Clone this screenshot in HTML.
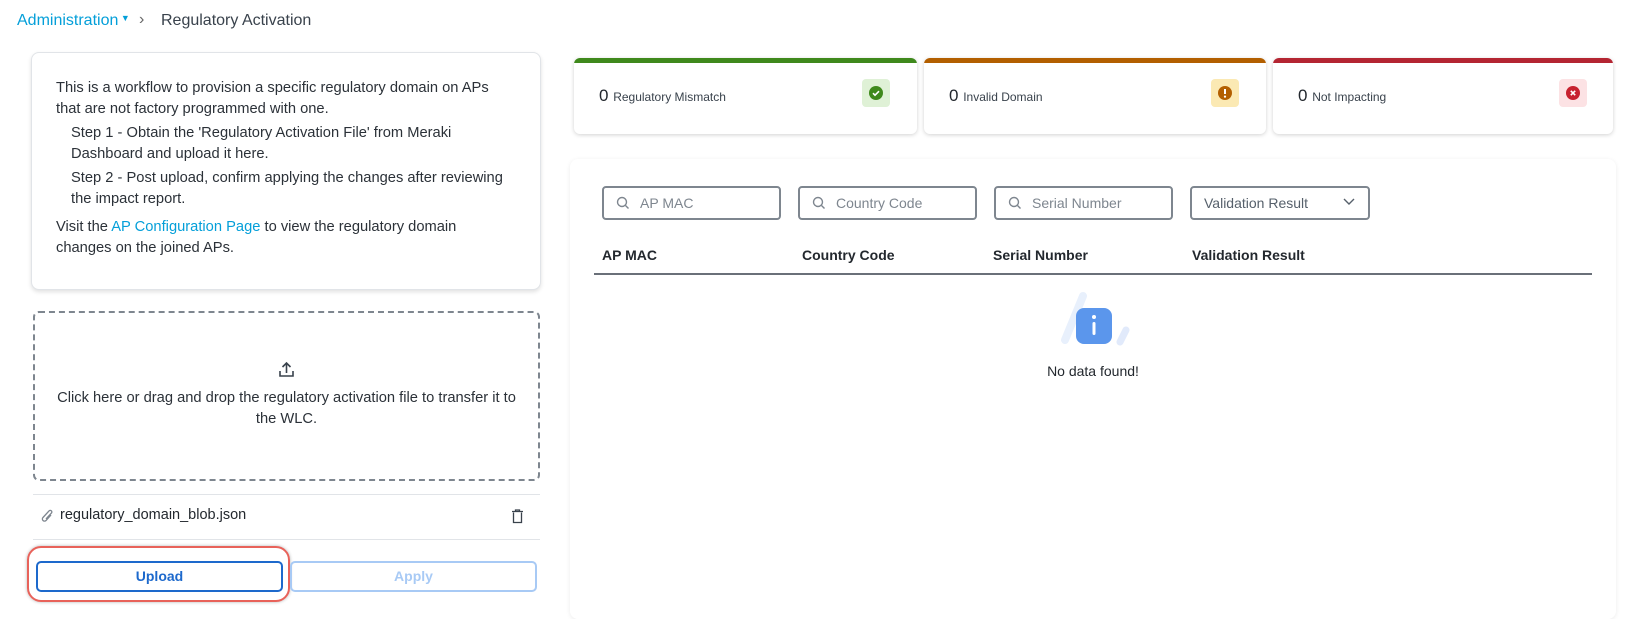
<!DOCTYPE html>
<html><head><meta charset="utf-8"><style>
*{box-sizing:border-box;margin:0;padding:0}
body{width:1640px;height:604px;overflow:hidden;background:#fff;font-family:"Liberation Sans",sans-serif;color:#23282e;font-size:14px;position:relative}
.a{position:absolute}
.card{position:absolute;background:#fff;border:1px solid #e1e4e8;border-radius:8px;box-shadow:0 2px 4px rgba(0,0,0,.12)}
.stat{position:absolute;top:58px;height:76px;background:#fff;border-radius:6px;box-shadow:0 1px 4px rgba(0,0,0,.18);overflow:hidden}
.stat .bar{height:5px}
.stat .t{position:absolute;left:25px;top:28px;font-size:17px;color:#23282e}
.stat .t small{font-size:12px;color:#39424c}
.stat .ic{position:absolute;top:21px;width:28px;height:28px;border-radius:4px;display:flex;align-items:center;justify-content:center}
.inp{position:absolute;top:186px;height:34px;border:2px solid #7e868f;border-radius:4px;color:#7e868f;font-size:14px;line-height:30px;padding-left:36px}
.th{position:absolute;top:247px;font-weight:bold;font-size:14px;color:#23282e}
</style></head><body>
<div class="a" style="left:17px;top:12px;font-size:16px;color:#049fd9">Administration<span style="font-size:9px;vertical-align:4px"> ▼</span></div>
<div class="a" style="left:139px;top:11px;font-size:16px;color:#666">›</div>
<div class="a" style="left:161px;top:12px;font-size:16px;color:#39424c">Regulatory Activation</div>

<div class="card" style="left:31px;top:52px;width:510px;height:238px"></div>
<div class="a" style="left:56px;top:78px;width:452px;line-height:20.5px;font-size:14.7px;color:#2b3138">
<div>This is a workflow to provision a specific regulatory domain on APs that are not factory programmed with one.</div>
<div style="padding-left:15px;margin-top:4px">Step 1 - Obtain the 'Regulatory Activation File' from Meraki Dashboard and upload it here.</div>
<div style="padding-left:15px;margin-top:4px">Step 2 - Post upload, confirm applying the changes after reviewing the impact report.</div>
<div style="margin-top:8px">Visit the <span style="color:#049fd9">AP Configuration Page</span> to view the regulatory domain changes on the joined APs.</div>
</div>

<div class="a" style="left:33px;top:311px;width:507px;height:170px;border:2px dashed #7e868f;border-radius:6px"></div>
<svg class="a" style="left:278px;top:361px" width="17" height="17" viewBox="0 0 17 17" fill="none" stroke="#39424c" stroke-width="1.6"><path d="M8.5 12V2M4.5 6l4-4 4 4M2 10v5h13v-5"/></svg>
<div class="a" style="left:50px;top:388px;width:473px;text-align:center;line-height:21px;font-size:14.7px;color:#2b3138">Click here or drag and drop the regulatory activation file to transfer it to the WLC.</div>
<div class="a" style="left:33px;top:494px;width:507px;height:1px;background:#e1e4e8"></div>
<svg class="a" style="left:41px;top:509px" width="13" height="15" viewBox="0 0 13 15" fill="none" stroke="#7e868f" stroke-width="1.3"><path d="M10 6L5 11.5a2 2 0 0 1-3-3L8 2a1.5 1.5 0 0 1 2.5 2L5 10"/></svg>
<div class="a" style="left:60px;top:507px;font-size:14.5px;color:#23282e">regulatory_domain_blob.json</div>
<svg class="a" style="left:511px;top:509px" width="13" height="15" viewBox="0 0 13 15" fill="none" stroke="#39424c" stroke-width="1.3"><path d="M1 2.5h11M4.5 2.5V1h4v1.5M2.5 3.5v10h8v-10"/></svg>
<div class="a" style="left:33px;top:539px;width:507px;height:1px;background:#e1e4e8"></div>
<div class="a" style="left:27px;top:546px;width:263px;height:56px;border:2px solid #e8625a;border-radius:14px;box-shadow:0 0 3px rgba(0,0,0,.3)"></div>
<div class="a" style="left:36px;top:561px;width:247px;height:31px;border:2px solid #1d69cc;border-radius:5px;color:#1d69cc;font-weight:bold;text-align:center;line-height:27px">Upload</div>
<div class="a" style="left:290px;top:561px;width:247px;height:31px;border:2px solid #a8caf5;border-radius:5px;color:#a8caf5;font-weight:bold;text-align:center;line-height:27px">Apply</div>

<div class="stat" style="left:574px;width:343px"><div class="bar" style="background:#3f891c"></div><div class="t">0 <small>Regulatory Mismatch</small></div><div class="ic" style="left:288px;background:#dff1d6"><svg width="16" height="16"><circle cx="8" cy="8" r="7" fill="#3f891c"/><path d="M5 8.2l2 2 4-4" stroke="#fff" stroke-width="1.6" fill="none"/></svg></div></div>
<div class="stat" style="left:924px;width:342px"><div class="bar" style="background:#b35f00"></div><div class="t">0 <small>Invalid Domain</small></div><div class="ic" style="left:287px;background:#fbe9b3"><svg width="16" height="16"><circle cx="8" cy="8" r="7" fill="#b35f00"/><path d="M8 4v5" stroke="#fff" stroke-width="2"/><circle cx="8" cy="11.6" r="1.1" fill="#fff"/></svg></div></div>
<div class="stat" style="left:1273px;width:340px"><div class="bar" style="background:#b42532"></div><div class="t">0 <small>Not Impacting</small></div><div class="ic" style="left:286px;background:#fce2e4"><svg width="16" height="16"><circle cx="8" cy="8" r="7" fill="#c7212f"/><path d="M5.8 5.8l4.4 4.4M10.2 5.8l-4.4 4.4" stroke="#fff" stroke-width="1.6"/></svg></div></div>

<div class="a" style="left:570px;top:159px;width:1046px;height:460px;background:#fff;border-radius:8px;box-shadow:0 1px 5px rgba(0,0,0,.08)"></div>
<div class="inp" style="left:602px;width:179px">AP MAC</div>
<div class="inp" style="left:798px;width:179px">Country Code</div>
<div class="inp" style="left:994px;width:179px">Serial Number</div>
<div class="inp" style="left:1190px;width:180px;padding-left:12px;color:#56606b">Validation Result</div>
<svg class="a" style="left:1343px;top:198px" width="12" height="8"><path d="M1 1l5 5 5-5" stroke="#56606b" stroke-width="1.4" fill="none"/></svg>
<svg class="a" style="left:616px;top:196px" width="14" height="14" fill="none" stroke="#7e868f" stroke-width="1.4"><circle cx="6" cy="6" r="4.5"/><path d="M9.5 9.5l3 3"/></svg>
<svg class="a" style="left:812px;top:196px" width="14" height="14" fill="none" stroke="#7e868f" stroke-width="1.4"><circle cx="6" cy="6" r="4.5"/><path d="M9.5 9.5l3 3"/></svg>
<svg class="a" style="left:1008px;top:196px" width="14" height="14" fill="none" stroke="#7e868f" stroke-width="1.4"><circle cx="6" cy="6" r="4.5"/><path d="M9.5 9.5l3 3"/></svg>
<div class="th" style="left:602px">AP MAC</div>
<div class="th" style="left:802px">Country Code</div>
<div class="th" style="left:993px">Serial Number</div>
<div class="th" style="left:1192px">Validation Result</div>
<div class="a" style="left:594px;top:273px;width:998px;height:2px;background:#6a7079"></div>
<svg class="a" style="left:1060px;top:290px" width="70" height="70"><path d="M23 6L5 50" stroke="#e8f0fc" stroke-width="8" stroke-linecap="round"/><path d="M66 40l-6 12" stroke="#e1eafb" stroke-width="7" stroke-linecap="round"/><rect x="16" y="18" width="36" height="36" rx="8" fill="#5b96ec"/><rect x="32.5" y="32" width="3" height="13" rx="1.5" fill="#fff"/><circle cx="34" cy="27" r="2" fill="#fff"/></svg>
<div class="a" style="left:993px;top:363px;width:200px;text-align:center;color:#23282e">No data found!</div>
</body></html>
